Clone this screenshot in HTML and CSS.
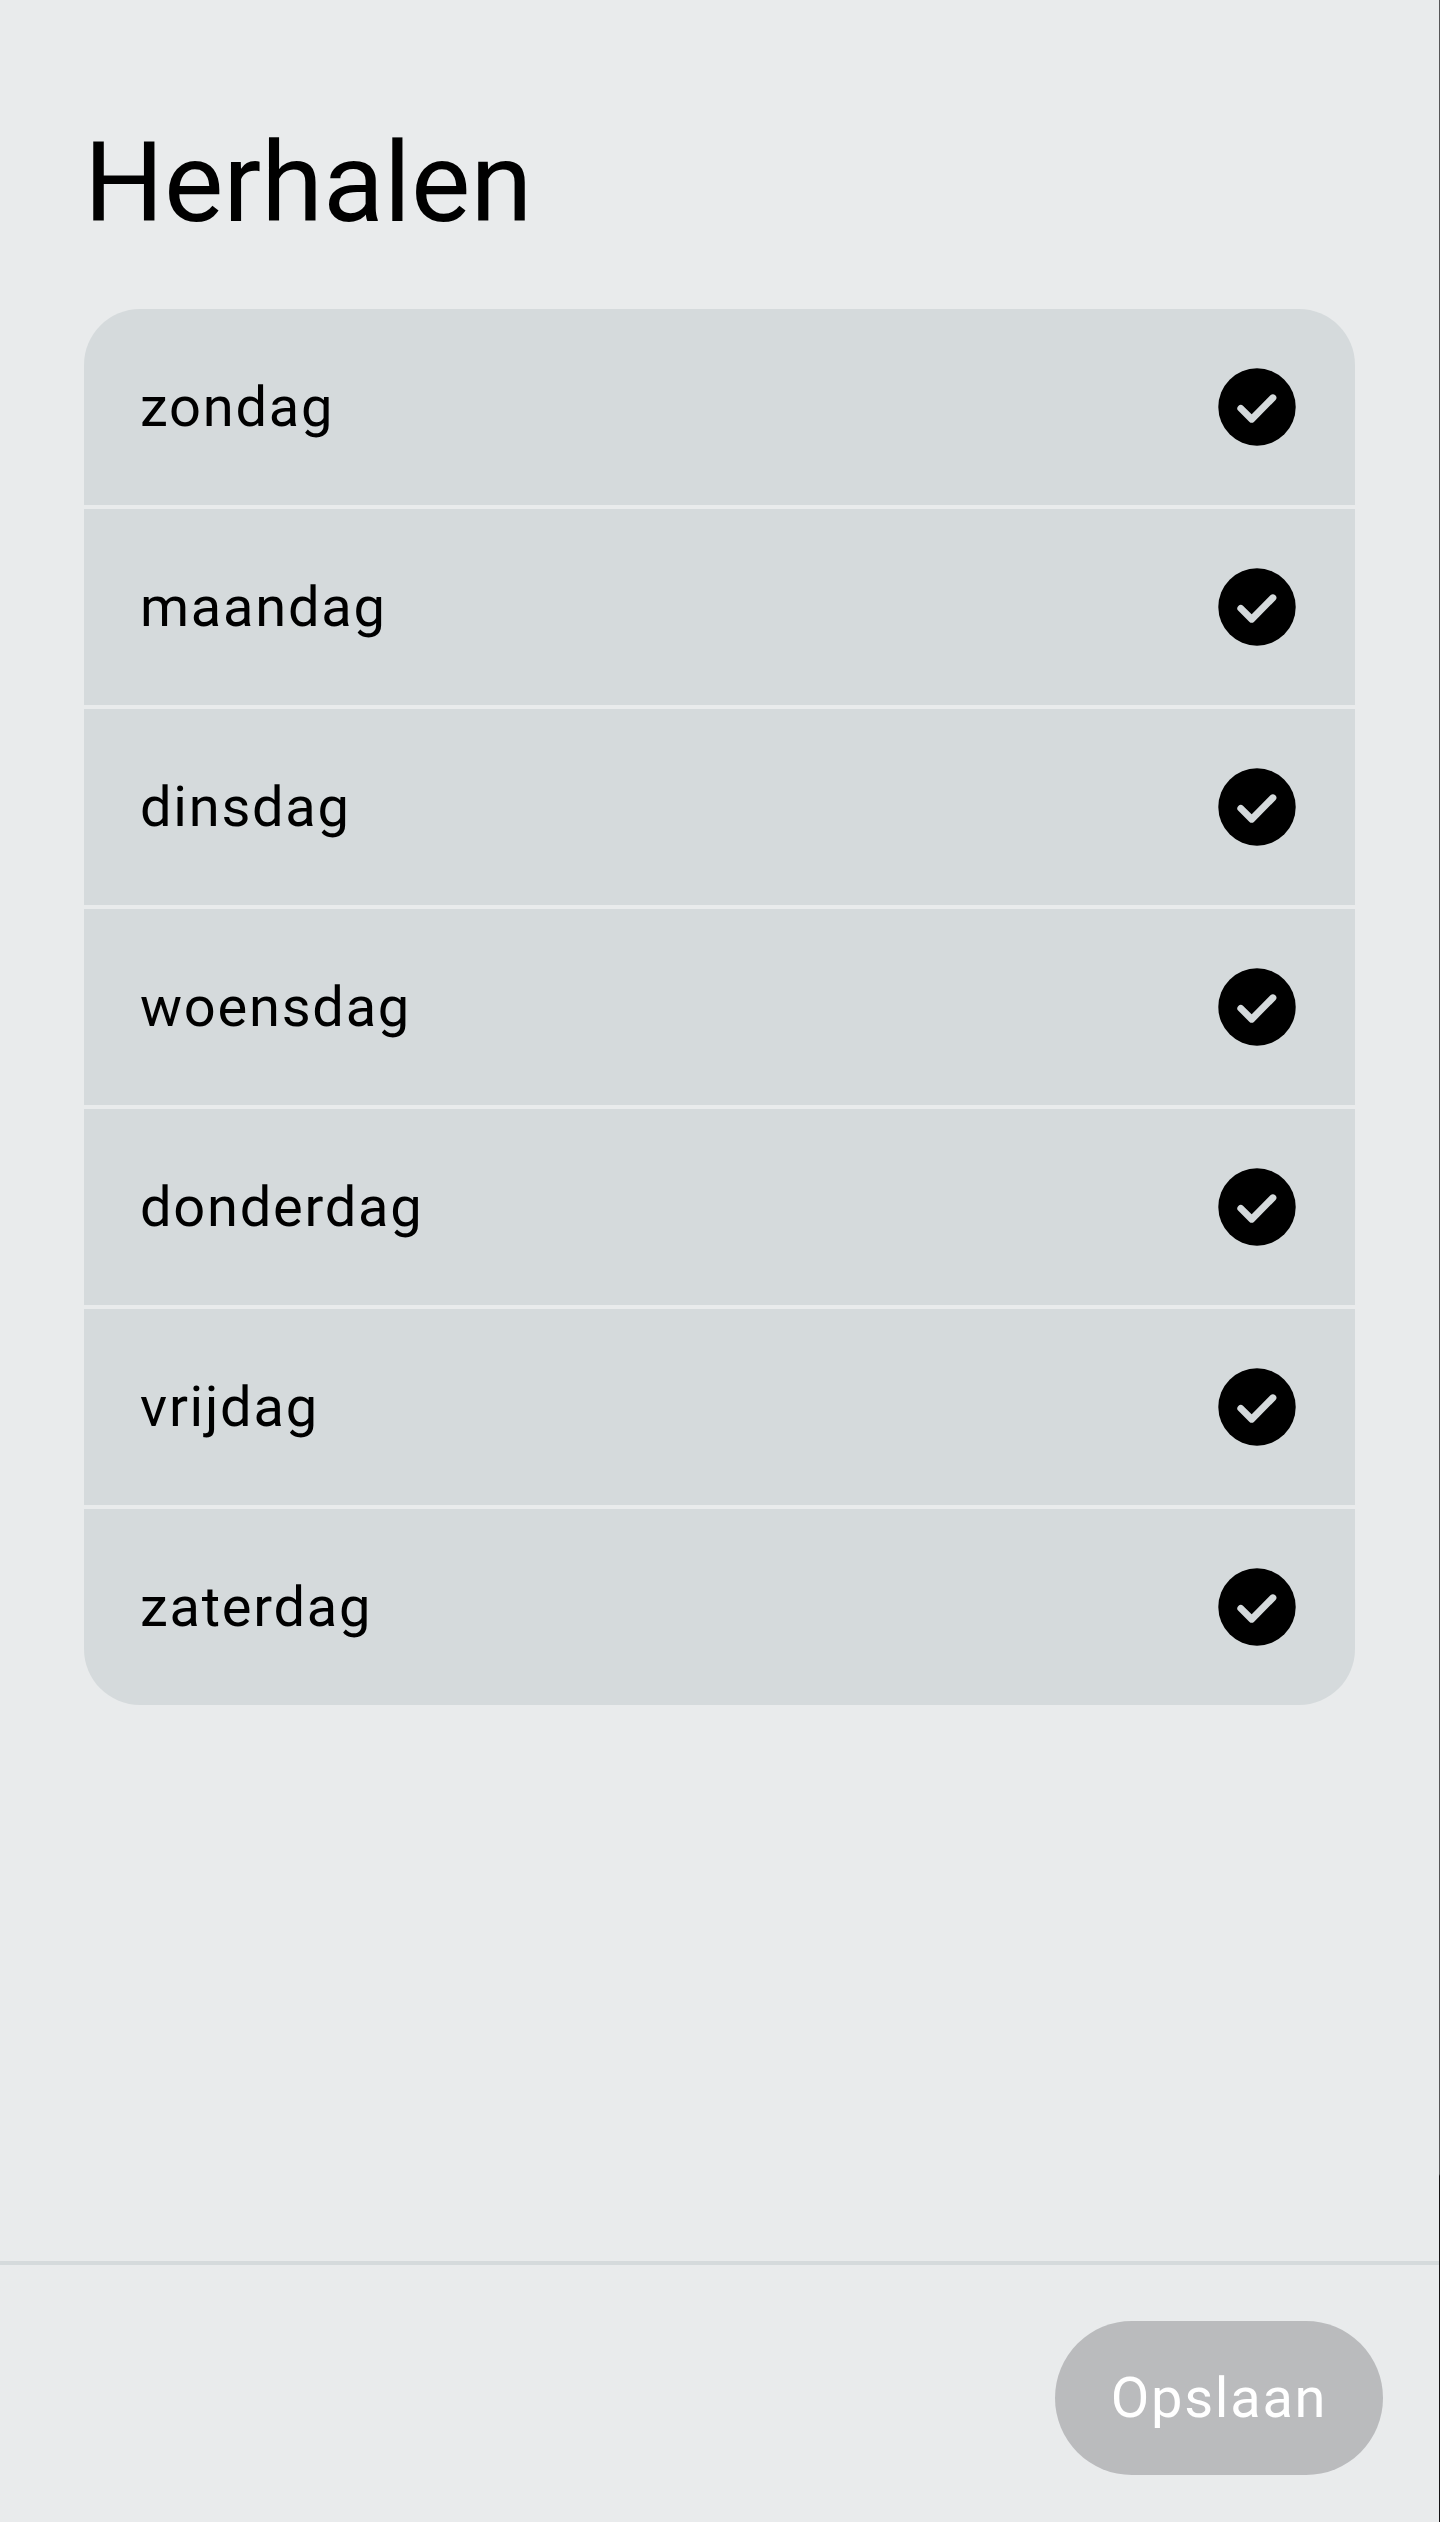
FILE: index.html
```
<!DOCTYPE html>
<html lang="nl">
<head>
	<meta charset="utf-8">
	<title>Herhalen</title>
	<meta name="viewport" content="width=device-width,initial-scale=1.0">
	<link rel="stylesheet" href="styles.css">
</head>
<body>
	<div class="page">
		<div class="screen">
			<h1 class="title">Herhalen</h1>
			<ul class="days">
				<li><span>zondag</span><svg class="check" viewBox="0 0 78 78"><circle cx="39" cy="39" r="38.7"/><path d="M22.8 40.4L33.7 51.2L54.9 29.8"/></svg></li>
				<li><span>maandag</span><svg class="check" viewBox="0 0 78 78"><circle cx="39" cy="39" r="38.7"/><path d="M22.8 40.4L33.7 51.2L54.9 29.8"/></svg></li>
				<li><span>dinsdag</span><svg class="check" viewBox="0 0 78 78"><circle cx="39" cy="39" r="38.7"/><path d="M22.8 40.4L33.7 51.2L54.9 29.8"/></svg></li>
				<li><span>woensdag</span><svg class="check" viewBox="0 0 78 78"><circle cx="39" cy="39" r="38.7"/><path d="M22.8 40.4L33.7 51.2L54.9 29.8"/></svg></li>
				<li><span>donderdag</span><svg class="check" viewBox="0 0 78 78"><circle cx="39" cy="39" r="38.7"/><path d="M22.8 40.4L33.7 51.2L54.9 29.8"/></svg></li>
				<li><span>vrijdag</span><svg class="check" viewBox="0 0 78 78"><circle cx="39" cy="39" r="38.7"/><path d="M22.8 40.4L33.7 51.2L54.9 29.8"/></svg></li>
				<li><span>zaterdag</span><svg class="check" viewBox="0 0 78 78"><circle cx="39" cy="39" r="38.7"/><path d="M22.8 40.4L33.7 51.2L54.9 29.8"/></svg></li>
			</ul>
			<div class="footer">
				<button class="save" type="button" disabled>Opslaan</button>
			</div>
		</div>
		<div class="edge"></div>
	</div>
</body>
</html>
```
FILE: styles.css
```
*{margin: 0;padding: 0;box-sizing: border-box;}
ul{list-style: none;}
body{
	font: 56px/66px Roboto, sans-serif;
	color: #000;
	background: #e9ebec;
}
.page{
	display: flex;
	height: 2522px;
}
.screen{
	flex: 1;
	display: flex;
	flex-direction: column;
}
/* thin strip down the right side */
.edge{
	width: 1px;
	background: linear-gradient(#565658 2174px, #151314 2176px);
}
.title{
	padding: 117px 84px 0;
	height: 309px;
	font-size: 112px;
	font-weight: 400;
	line-height: 132px;
}
.days{
	display: flex;
	flex-direction: column;
	gap: 4px;
	margin: 0 84px;
	border-radius: 56px;
	overflow: hidden;
}
.days li{
	display: flex;
	align-items: center;
	justify-content: space-between;
	height: 196px;
	padding: 0 59px 0 56px;
	background: #d5dadc;
	letter-spacing: 1.75px;
}
.check{
	width: 78px;
	height: 78px;
}
.check path{
	fill: none;
	stroke: #d5dadc;
	stroke-width: 6.9;
	stroke-linecap: round;
	stroke-linejoin: round;
}
.footer{
	display: flex;
	justify-content: flex-end;
	height: 261px;
	margin-top: auto;
	padding: 56px 56px 0 0;
	border-top: 4px solid #d5dadc;
}
.save{
	width: 328px;
	height: 154px;
	border: 0;
	border-radius: 77px;
	background: #babbbd;
	color: #fff;
	font: inherit;
	letter-spacing: 1.75px;
}
```
